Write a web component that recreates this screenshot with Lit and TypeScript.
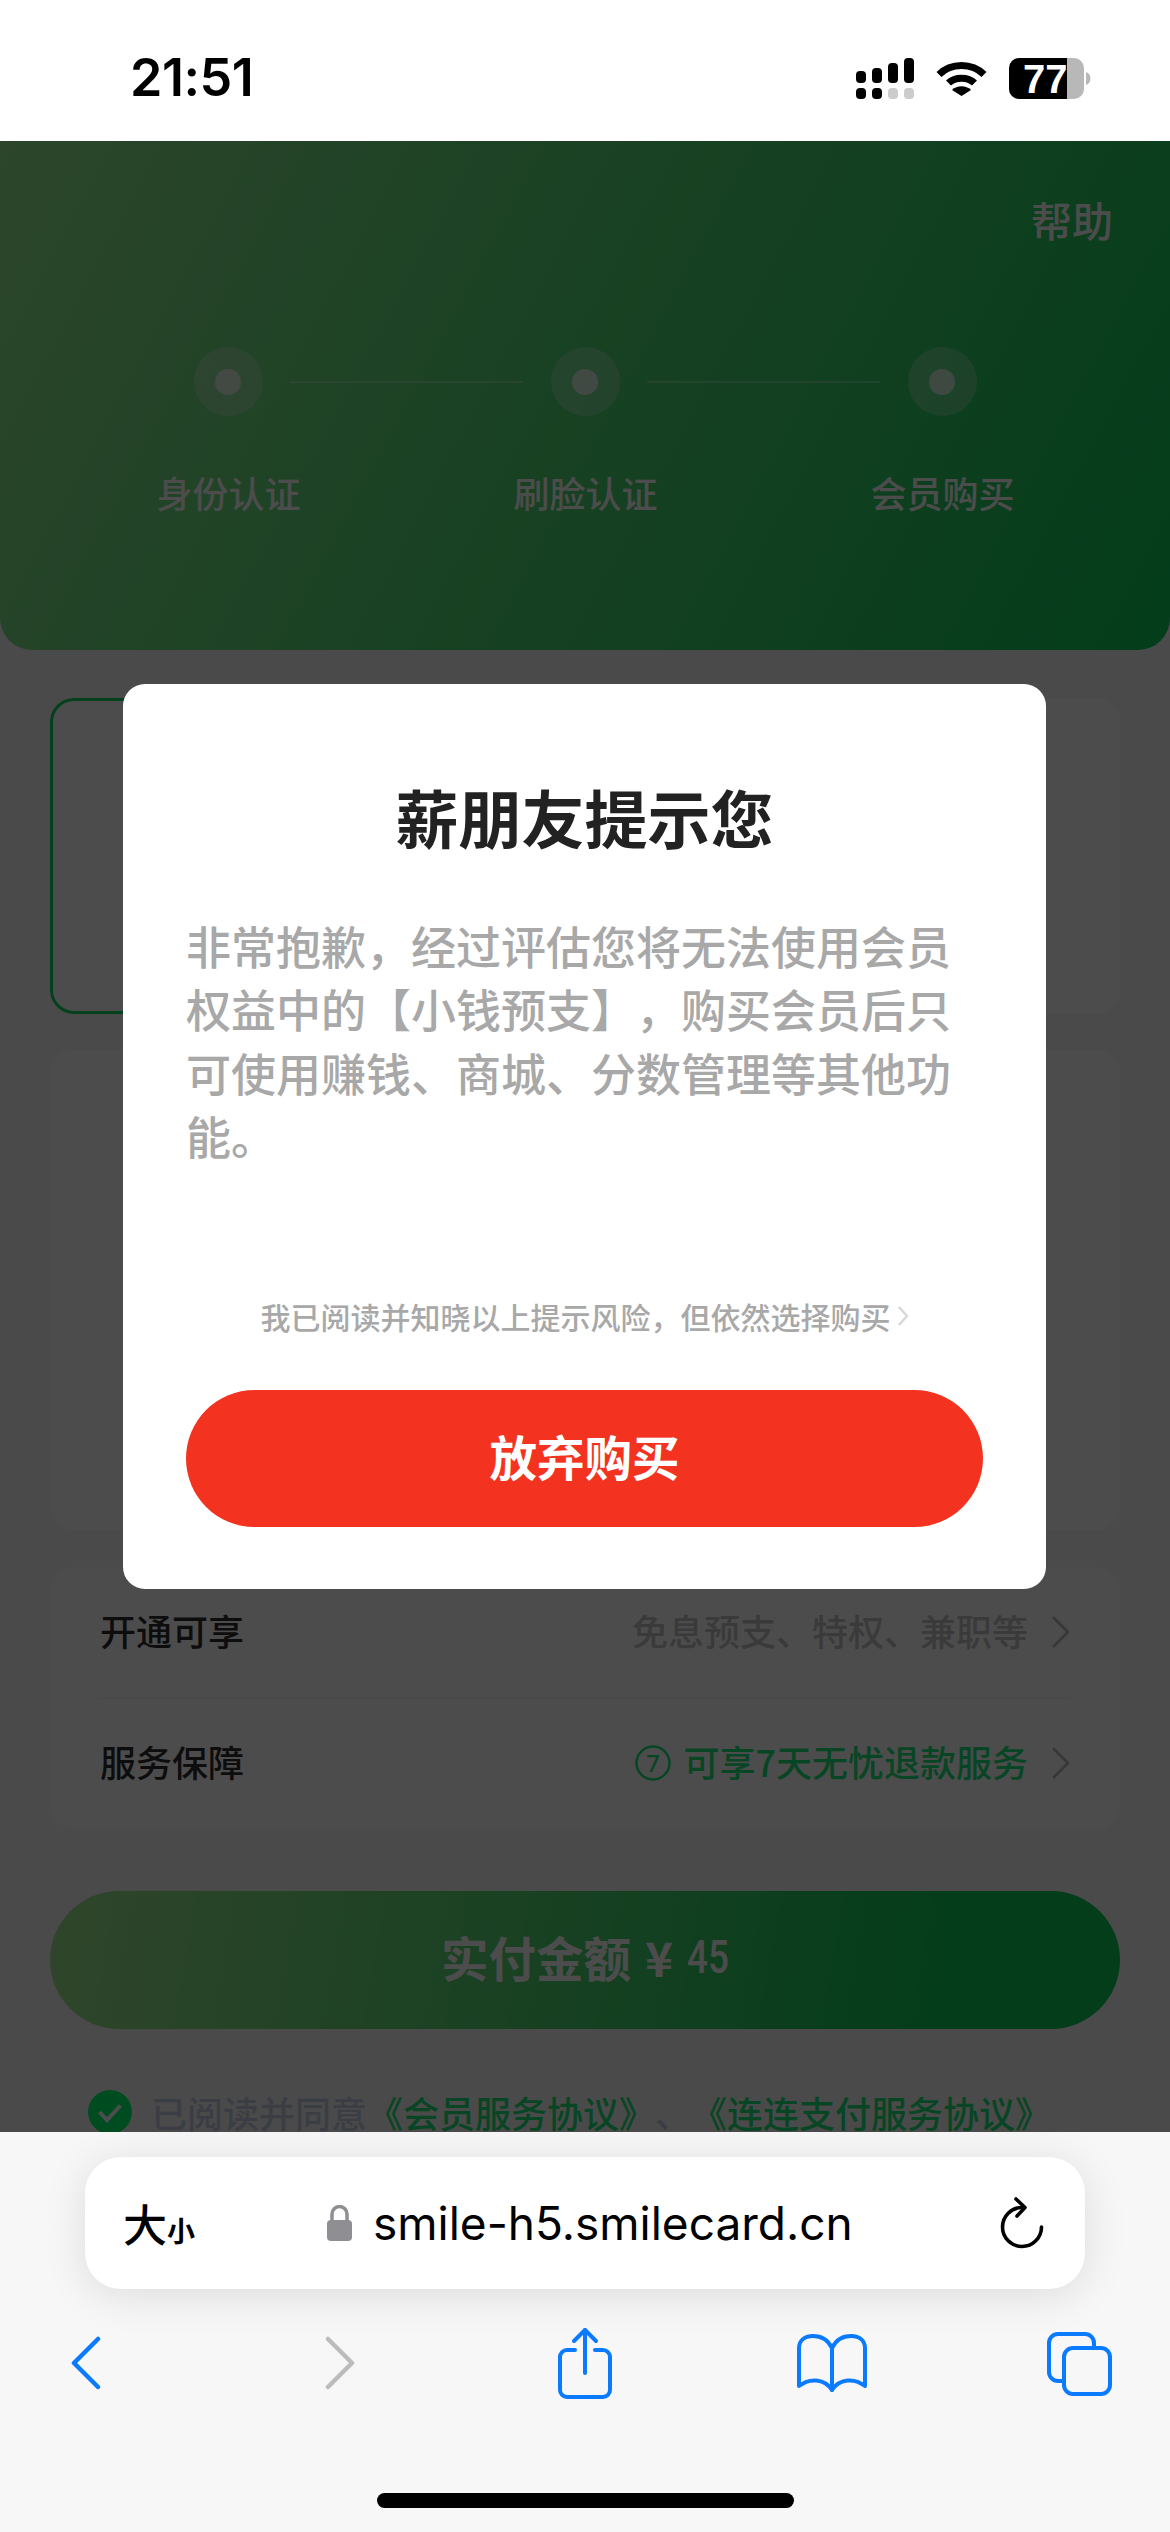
import { LitElement, html, css } from "lit";
import { customElement } from "lit/decorators.js";

const chevron = html`<svg class="chev" viewBox="0 0 18 32" width="18" height="32"><path d="M2 2 L16 16 L2 30" fill="none" stroke="currentColor" stroke-width="3" stroke-linecap="round" stroke-linejoin="round"/></svg>`;

@customElement("app-root")
export class AppRoot extends LitElement {
  static styles = css`
    :host { display: block; width: 1170px; height: 2532px; overflow: hidden; background: #fff;
      font-family: "Noto Sans CJK SC", "Noto Sans", sans-serif; text-spacing-trim: space-all; }
    * { box-sizing: border-box; }
    .screen { display: flex; flex-direction: column; height: 2532px; }
    .status { height: 141px; flex: none; background: #fff; display: flex; align-items: center; justify-content: space-between; padding: 15px 79px 0 130px; }
    .time { font-family: Inter, "Liberation Sans", sans-serif; font-weight: 600; font-size: 52px; line-height: 56px; color: #000; letter-spacing: -0.5px; }
    .sys { display: flex; align-items: center; gap: 22px; }
    .sys svg { display: block; }
    .batt-text { font-family: "Liberation Sans", sans-serif; font-weight: 700; font-size: 40px; fill: #fff; }

    .main { position: relative; flex: 1; overflow: hidden; background: #f8f8f8; }
    .overlay { position: absolute; inset: 0; background: rgba(0,0,0,.7); }

    .hero { height: 509px; border-radius: 0 0 32px 32px; background: linear-gradient(118deg, #94e890 0%, #0ccb58 100%); color: #fff; display: flex; flex-direction: column; }
    .help { align-self: flex-end; margin: 50px 57px 0 0; font-size: 41px; line-height: 56px; font-weight: 500; }
    .dots { display: flex; align-items: center; gap: 27.5px; margin: 100px 0 0 193.5px; }
    .dot { width: 69px; height: 69px; border-radius: 50%; background: rgba(255,255,255,.25); display: flex; align-items: center; justify-content: center; flex: none; }
    .dot i { display: block; width: 26px; height: 26px; border-radius: 50%; background: rgba(255,255,255,.7); }
    .line { width: 233px; height: 2px; background: rgba(255,255,255,.3); flex: none; }
    .labels { display: grid; grid-template-columns: repeat(3, 357px); padding: 0 50px; margin-top: 51px; text-align: center; font-size: 36px; line-height: 50px; font-weight: 500; }

    .body { padding: 0 50px; display: flex; flex-direction: column; }
    .plans { display: flex; gap: 30px; margin-top: 48px; height: 316px; }
    .plan { flex: 1; border-radius: 24px; background: #fff; }
    .plan.on { border: 3px solid #10d867; }
    .card { background: #fff; border-radius: 24px; }
    .mid { height: 480px; margin-top: 36px; }
    .rows { margin-top: 37px; padding: 0 50px; height: 262px; display: flex; flex-direction: column; }
    .row { flex: 1; display: flex; align-items: center; justify-content: space-between; font-size: 36px; line-height: 50px; color: #2e2e2e; font-weight: 500; padding-bottom: 5px; }
    .row + .row { border-top: 1px solid #eee; }
    .val { display: flex; align-items: center; gap: 12px; color: #c4c4c4; white-space: nowrap; }
    .val.green { color: #1ce878; }
    .chev { display: block; color: #bdbdbd; margin: 4px 0 0 12px; }
    .seven { display: block; margin-top: 4px; }
    .seven text { font-family: "Noto Sans", sans-serif; font-size: 24px; fill: #1ce878; }
    .buy { margin-top: 62px; height: 138px; border-radius: 69px; flex: none; background: linear-gradient(100deg, #a0e890 0%, #0ccb58 85%); color: #fff; display: flex; align-items: center; justify-content: center; gap: 14px; font-size: 47.5px; font-weight: 700; line-height: 60px; padding-bottom: 6px; }
    .amt { display: inline-block; font-family: Roboto, sans-serif; font-size: 46px; font-weight: 500; transform: scaleX(.8); transform-origin: left center; width: 42px; }
    .agree { margin: 60px 0 0 38px; display: flex; align-items: center; gap: 19px; font-size: 36px; line-height: 44px; color: #c4d0e4; white-space: nowrap; font-weight: 500; }
    .agree a { color: #1ce878; }
    .tick { flex: none; display: block; margin-top: 1px; }

    .modal { position: absolute; left: 123px; top: 543px; width: 923px; height: 905px; background: #fff; border-radius: 22px; padding: 89px 63px 62px; display: flex; flex-direction: column; }
    .title { font-size: 63px; line-height: 86px; font-weight: 700; color: #222; text-align: center; }
    .msg { margin-top: 55px; font-size: 45px; line-height: 63.3px; color: #a8a8a8; font-weight: 500; }
    .notice { margin-top: 129px; display: flex; align-items: center; justify-content: center; gap: 6px; font-size: 30px; line-height: 40px; color: #a8a8a8; white-space: nowrap; font-weight: 500; }
    .notice svg { display: block; }
    .cta { margin-top: 54px; height: 137px; border-radius: 69px; background: #f3331f; color: #fff; display: flex; align-items: center; justify-content: center; font-size: 47.5px; font-weight: 700; padding-bottom: 6px; }

    .safari { flex: none; height: 400px; background: #f7f7f8; padding-top: 25px; display: flex; flex-direction: column; }
    .addr { margin: 0 85px; height: 132px; border-radius: 36px; background: #fff; box-shadow: 0 6px 44px rgba(0,0,0,.11); display: flex; align-items: center; padding: 0 41px 0 38px; flex: none; }
    .aa { width: 72px; display: flex; align-items: baseline; color: #000; }
    .aa b { font-weight: 500; font-size: 44px; line-height: 56px; }
    .aa span { font-weight: 700; font-size: 28px; }
    .lock { margin-left: 132px; display: block; }
    .url { margin-left: 21px; font-family: Inter, "Liberation Sans", sans-serif; font-size: 46px; line-height: 60px; color: #000; white-space: nowrap; }
    .reload { margin-left: auto; display: block; }
    .tools { margin-top: 38px; height: 72px; flex: none; display: grid; grid-template-columns: 254px 245px 247px 247px 60px; align-items: center; padding-left: 56px; }
    .tool { width: 60px; display: flex; justify-content: center; overflow: visible; }
    .tool svg { display: block; flex: none; }
    .home { margin: 94px auto 0; width: 417px; height: 15px; border-radius: 8px; background: #000; flex: none; }
  `;

  render() {
    return html`
      <div class="screen" lang="zh-CN">
        <div class="status">
          <div class="time">21:51</div>
          <div class="sys">
            <svg width="58" height="41" viewBox="0 0 58 41">
              <rect x="0" y="13" width="10" height="12" rx="4"/><rect x="16" y="10" width="10" height="15" rx="4"/><rect x="32" y="5" width="10" height="20" rx="4"/><rect x="48" y="0" width="10" height="25" rx="4"/>
              <rect x="0" y="30" width="10" height="11" rx="4"/><rect x="16" y="30" width="10" height="11" rx="4"/><rect x="32" y="30" width="10" height="11" rx="4" fill="#ccc"/><rect x="48" y="30" width="10" height="11" rx="4" fill="#ccc"/>
            </svg>
            <svg width="51" height="37" viewBox="0 0 51 37">
              <path d="M3 14.5 C15 2.5 36 2.5 48 14.5" fill="none" stroke="#000" stroke-width="7"/>
              <path d="M12.5 23 C19 16.5 32 16.5 38.5 23" fill="none" stroke="#000" stroke-width="7"/>
              <path d="M16 31 C21 26 30 26 35 31 L25.5 37 Z" transform="translate(0 -1)"/>
            </svg>
            <svg width="82" height="41" viewBox="0 0 82 41">
              <rect width="75" height="41" rx="10" fill="#b8b8b8"/>
              <path d="M10 0H58V41H10a10 10 0 0 1-10-10V10a10 10 0 0 1 10-10z"/>
              <path d="M77 14a7 7 0 0 1 0 13z" fill="#b8b8b8"/>
              <text class="batt-text" x="14" y="35">77</text>
            </svg>
          </div>
        </div>

        <div class="main">
          <div class="hero">
            <div class="help">帮助</div>
            <div class="dots">
              <div class="dot"><i></i></div><div class="line"></div>
              <div class="dot"><i></i></div><div class="line"></div>
              <div class="dot"><i></i></div>
            </div>
            <div class="labels"><div>身份认证</div><div>刷脸认证</div><div>会员购买</div></div>
          </div>
          <div class="body">
            <div class="plans"><div class="plan on"></div><div class="plan"></div></div>
            <div class="card mid"></div>
            <div class="card rows">
              <div class="row"><span>开通可享</span><div class="val"><span>免息预支、特权、兼职等</span>${chevron}</div></div>
              <div class="row"><span>服务保障</span><div class="val green">
                <svg class="seven" width="36" height="36" viewBox="0 0 36 36"><circle cx="18" cy="18" r="16.5" fill="none" stroke="#1ce878" stroke-width="2.5"/><text x="18" y="27" text-anchor="middle">7</text></svg>
                <span>可享7天无忧退款服务</span>${chevron}</div></div>
            </div>
            <div class="buy"><span>实付金额</span><span>¥</span><span class="amt">45</span></div>
            <div class="agree">
              <svg class="tick" width="44" height="44" viewBox="0 0 44 44"><circle cx="22" cy="22" r="22" fill="#00ff70"/><path d="M11.5 22 L19 30 L32.5 15.5" fill="none" stroke="#fff" stroke-width="4"/></svg>
              <span>已阅读并同意<a>《会员服务协议》</a>、<a>《连连支付服务协议》</a></span>
            </div>
          </div>
          <div class="overlay"></div>
          <div class="modal">
            <div class="title">薪朋友提示您</div>
            <div class="msg">非常抱歉，经过评估您将无法使用会员权益中的【小钱预支】，购买会员后只可使用赚钱、商城、分数管理等其他功能。</div>
            <div class="notice"><span>我已阅读并知晓以上提示风险，但依然选择购买</span>
              <svg width="12" height="22" viewBox="0 0 12 22"><path d="M2 2 L10 11 L2 20" fill="none" stroke="#d8d8d8" stroke-width="2.5"/></svg></div>
            <div class="cta">放弃购买</div>
          </div>
        </div>

        <div class="safari">
          <div class="addr">
            <div class="aa"><b>大</b><span>小</span></div>
            <svg class="lock" width="25" height="36" viewBox="0 0 25 36"><path d="M5 17 V9 a7.5 7.5 0 0 1 15 0 V17" fill="none" stroke="#8e8e93" stroke-width="3.5"/><rect x="0" y="15" width="25" height="21" rx="4" fill="#8e8e93"/></svg>
            <div class="url">smile-h5.smilecard.cn</div>
            <svg class="reload" width="44" height="52" viewBox="0 0 44 52"><path d="M22 10.5 A19.5 19.5 0 1 0 41.5 30" fill="none" stroke="#000" stroke-width="3.6" stroke-linecap="round"/><path d="M16 2 L25 10.5 L17 19" fill="none" stroke="#000" stroke-width="3.6" stroke-linecap="round" stroke-linejoin="round"/></svg>
          </div>
          <div class="tools">
            <div class="tool"><svg width="30" height="54" viewBox="0 0 30 54"><path d="M27 3 L3 27 L27 51" fill="none" stroke="#0a7aff" stroke-width="4.5" stroke-linecap="round" stroke-linejoin="round"/></svg></div>
            <div class="tool"><svg width="30" height="54" viewBox="0 0 30 54"><path d="M3 3 L27 27 L3 51" fill="none" stroke="#bcbcbc" stroke-width="4.5" stroke-linecap="round" stroke-linejoin="round"/></svg></div>
            <div class="tool"><svg width="56" height="72" viewBox="0 0 56 72"><g fill="none" stroke="#0a7aff" stroke-width="4" stroke-linecap="round" stroke-linejoin="round"><path d="M18 23 H10 a7 7 0 0 0 -7 7 V63 a7 7 0 0 0 7 7 H46 a7 7 0 0 0 7 -7 V30 a7 7 0 0 0 -7 -7 H38"/><path d="M28 46 V3"/><path d="M17 14 L28 3 L39 14"/></g></svg></div>
            <div class="tool"><svg width="70" height="58" viewBox="0 0 70 58"><g fill="none" stroke="#0a7aff" stroke-width="4" stroke-linejoin="round" stroke-linecap="round"><path d="M35 14 C31 6 24 2 16 2 C7 2 2 7 2 14 V52 C12 44 27 44 35 56 C43 44 58 44 68 52 V14 C68 7 63 2 54 2 C46 2 39 6 35 14 Z"/><path d="M35 14 V56"/></g></svg></div>
            <div class="tool"><svg width="66" height="65" viewBox="0 0 66 65"><g fill="none" stroke="#0a7aff" stroke-width="4"><rect x="18" y="17" width="46" height="46" rx="9"/><path d="M18 50 H12 a9 9 0 0 1 -9 -9 V12 a9 9 0 0 1 9 -9 H39 a9 9 0 0 1 9 9 V17"/></g></svg></div>
          </div>
          <div class="home"></div>
        </div>
      </div>
    `;
  }
}
